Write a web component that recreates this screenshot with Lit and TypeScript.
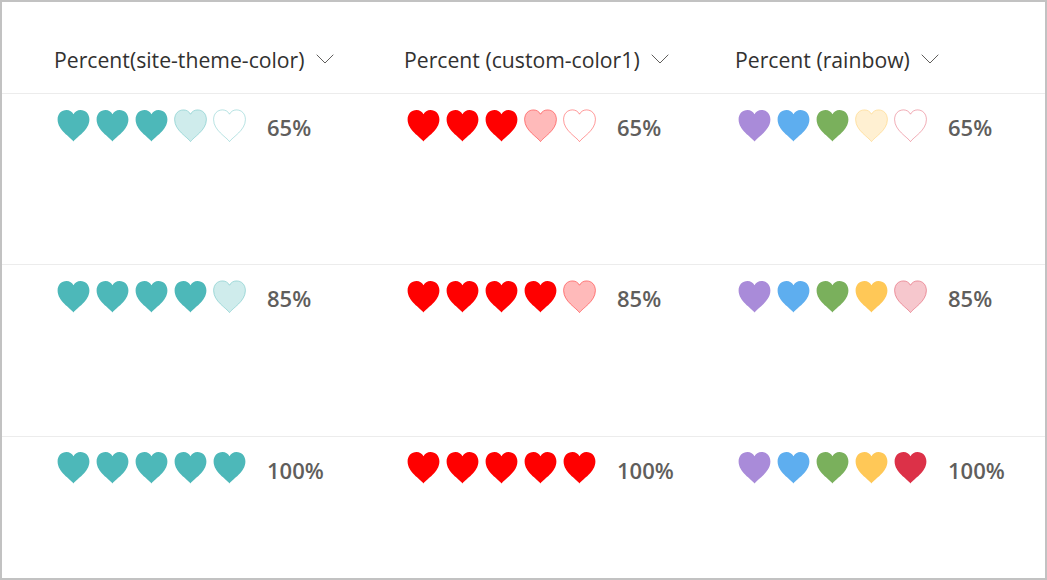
import { LitElement, html, css, svg } from "lit";
import { customElement } from "lit/decorators.js";

const HEART = "M16.5 32.6C13.4 28 .6 21.4 .6 10.6C.6 4.6 4.4 .9 9.6 .9C12.6 .9 15.2 2.6 16.5 5.2C17.8 2.6 20.4 .9 23.4 .9C28.6 .9 32.4 4.6 32.4 10.6C32.4 21.4 19.6 28 16.5 32.6Z";

const TEAL = "#4db8b9";
const RED = "#ff0000";
const RAINBOW = ["#a98bd9", "#5eaeef", "#7ab05c", "#ffc857", "#dc3148"];

const columns = [
  { title: "Percent(site-theme-color)", colors: [TEAL, TEAL, TEAL, TEAL, TEAL] },
  { title: "Percent (custom-color1)", colors: [RED, RED, RED, RED, RED] },
  { title: "Percent (rainbow)", colors: RAINBOW },
];
const rows = [65, 85, 100];

function heart(color: string, fill: number) {
  const strokeOpacity = fill === 0 ? 0.4 : fill === 1 ? 0 : 0.45;
  return html`<svg class="heart" viewBox="0 0 33 33" aria-hidden="true">
    ${svg`<path d=${HEART} fill=${color} fill-opacity=${fill} stroke=${color} stroke-opacity=${strokeOpacity} stroke-width="1"></path>`}
  </svg>`;
}

function fills(pct: number) {
  return [1, 1, 1, pct >= 85 ? 1 : 0.27, pct >= 100 ? 1 : pct >= 85 ? 0.27 : 0];
}

@customElement("app-root")
export class AppRoot extends LitElement {
  static styles = css`
    :host {
      display: block;
      width: 1047px;
      height: 580px;
      box-sizing: border-box;
      border: 2px solid #c2c2c2;
      background: #fff;
      font-family: "Open Sans", "Liberation Sans", sans-serif;
      overflow: hidden;
    }
    .row {
      display: grid;
      grid-template-columns: 350px 331px 1fr;
      padding-left: 52px;
      border-bottom: 1px solid #ececec;
    }
    .row:last-child {
      border-bottom: none;
    }
    .head {
      height: 92px;
      box-sizing: border-box;
      padding-top: 42px;
    }
    .head .cell {
      display: flex;
      align-items: flex-start;
      gap: 11px;
      font-size: 21.2px;
      line-height: 32px;
      color: #323130;
      white-space: nowrap;
      height: 32px;
    }
    .chev {
      width: 18px;
      height: 10px;
      margin-top: 10px;
      flex: none;
    }
    .body-row {
      height: 171.4px;
      box-sizing: border-box;
      padding-top: 14.6px;
    }
    .hearts-cell {
      display: flex;
      align-items: flex-start;
      padding-left: 3px;
    }
    .hearts {
      display: flex;
      gap: 6px;
    }
    .heart {
      width: 33px;
      height: 33px;
      display: block;
    }
    .pct {
      margin-left: 21px;
      font-size: 22px;
      font-weight: 600;
      line-height: 32px;
      margin-top: 2.4px;
      color: #605e5c;
    }
  `;

  render() {
    return html`
      <div class="row head">
        ${columns.map(
          (c) => html`<div class="cell">
            <span>${c.title}</span>
            <svg class="chev" viewBox="0 0 18 10">
              <path d="M.7.7L9 9L17.3.7" fill="none" stroke="#605e5c" stroke-width="1"></path>
            </svg>
          </div>`
        )}
      </div>
      ${rows.map(
        (p) => html`<div class="row body-row">
          ${columns.map((c) => {
            const f = fills(p);
            return html`<div class="hearts-cell">
              <div class="hearts">${c.colors.map((col, i) => heart(col, f[i]))}</div>
              <div class="pct">${p}%</div>
            </div>`;
          })}
        </div>`
      )}
    `;
  }
}
